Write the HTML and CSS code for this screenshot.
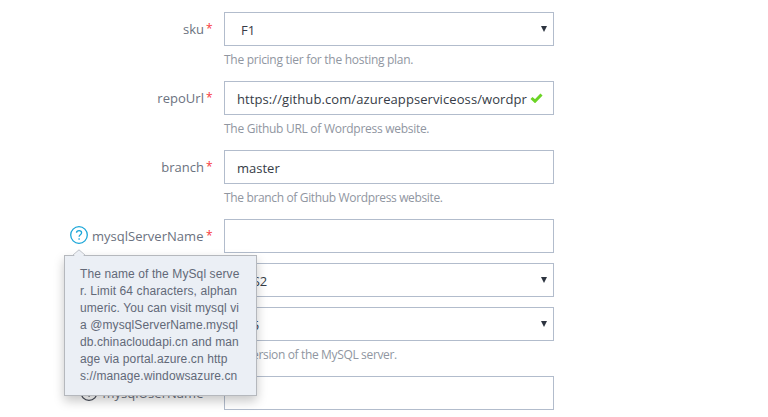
FILE: index.html
```html
<!DOCTYPE html>
<html lang="en">
<head>
<meta charset="utf-8">
<title>Template parameters</title>
<link rel="stylesheet" href="styles.css">
</head>
<body>
<main class="form">
  <div class="row">
    <div class="label"><span class="name">sku</span><span class="required">*</span></div>
    <div class="field">
      <div class="control select"><span class="value">F1</span><svg class="arrow" viewBox="0 0 6 6"><path d="M0 0H6L3 6Z"/></svg></div>
      <p class="hint">The pricing tier for the hosting plan.</p>
    </div>
  </div>
  <div class="row">
    <div class="label"><span class="name">repoUrl</span><span class="required">*</span></div>
    <div class="field">
      <div class="control"><span class="value url">https://github.com/azureappserviceoss/wordpr</span><svg class="check" viewBox="0 0 13 10"><path d="M1.5 5L5 8.2L11.5 1.5"/></svg></div>
      <p class="hint">The Github URL of Wordpress website.</p>
    </div>
  </div>
  <div class="row">
    <div class="label"><span class="name">branch</span><span class="required">*</span></div>
    <div class="field">
      <div class="control"><span class="value">master</span></div>
      <p class="hint tight">The branch of Github Wordpress website.</p>
    </div>
  </div>
  <div class="row">
    <div class="label">
      <span class="help active"><svg viewBox="0 0 18 18"><circle cx="9" cy="9" r="8.3"/><path d="M6.5 6.8C6.6 3.9 11.6 3.9 11.6 6.8C11.6 8.8 9.1 8.8 9.1 10.8M9.1 12.3V13.8"/></svg></span>
      <span class="name long">mysqlServerName</span><span class="required">*</span>
      <div class="tooltip"><svg class="pointer" viewBox="0 0 14 8"><path class="fill" d="M1 8L7 1L13 8Z"/><path class="edge" d="M0.5 6.5L7 .8L13.5 6.5"/></svg>The name of the MySql serve<br>r. Limit 64 characters, alphan<br>umeric. You can visit mysql vi<br>a @mysqlServerName.mysql<br>db.chinacloudapi.cn and man<br>age via portal.azure.cn http<br>s://manage.windowsazure.cn</div>
    </div>
    <div class="field"><div class="control"></div></div>
  </div>
  <div class="row">
    <div class="label"></div>
    <div class="field"><div class="control select"><span class="value">MS2</span><svg class="arrow" viewBox="0 0 6 6"><path d="M0 0H6L3 6Z"/></svg></div></div>
  </div>
  <div class="row">
    <div class="label"></div>
    <div class="field">
      <div class="control select"><span class="value">5.5</span><svg class="arrow" viewBox="0 0 6 6"><path d="M0 0H6L3 6Z"/></svg></div>
      <p class="hint tight">The version of the MySQL server.</p>
    </div>
  </div>
  <div class="row">
    <div class="label">
      <span class="help"><svg viewBox="0 0 18 18"><circle cx="9" cy="9" r="8.3"/><path d="M6.5 6.8C6.6 3.9 11.6 3.9 11.6 6.8C11.6 8.8 9.1 8.8 9.1 10.8M9.1 12.3V13.8"/></svg></span>
      <span class="name long">mysqlUserName</span><span class="required">*</span>
    </div>
    <div class="field"><div class="control"></div></div>
  </div>
</main>
</body>
</html>
```
FILE: styles.css
```css
* { box-sizing: border-box; }
body {
  margin: 0;
  height: 417px;
  overflow: hidden;
  background: #fff;
  font-family: "Open Sans", "Noto Sans", sans-serif;
  font-size: 13px;
}
.form { display: flex; flex-direction: column; gap: 10px; padding-top: 12px; }
.row { display: grid; grid-template-columns: 212px 330px; column-gap: 12px; }
.label {
  position: relative;
  display: flex;
  justify-content: flex-end;
  align-items: center;
  height: 34px;
  color: #6b7280;
  line-height: 18px;
}
.name { letter-spacing: .03px; }
.long { margin-right: .5px; }
.required { margin-left: 2px; color: #f8383b; width: 6px; font-size: 12px; }
.help { width: 18px; height: 18px; margin: -2px 4px 0 0; color: #454b57; }
.help svg { display: block; fill: none; stroke: currentColor; stroke-width: 1.3; }
.help.active { color: #1ba6d8; }
.control {
  display: flex;
  align-items: center;
  height: 34px;
  padding: 1px 10px 0 12px;
  border: 1px solid #b2bccc;
  color: #363c47;
}
.select { padding: 1px 6px 0 16px; }
.value { white-space: nowrap; }
.url { width: 291px; letter-spacing: .09px; }
.arrow { width: 6px; height: 6px; margin: -1px 0 0 auto; fill: #2d3440; }
.check { width: 13px; height: 10px; flex: none; margin: -2px 0 0 2px; fill: none; stroke: #6bd425; stroke-width: 3; }
.hint {
  height: 25px;
  margin: 0;
  padding-top: 6px;
  line-height: 16px;
  font-size: 12px;
  letter-spacing: -.28px;
  color: #9096a1;
  white-space: nowrap;
}
.tight { letter-spacing: -.35px; }
.tooltip {
  position: absolute;
  z-index: 2;
  left: 64px;
  top: 36px;
  width: 193px;
  height: 141px;
  padding: 10px 0 0 15px;
  border: 1px solid #b5b8bd;
  background: #ebeff5;
  box-shadow: 0 5px 10px rgba(0, 0, 0, .22);
  font: 12px/17px "Liberation Sans", Arial, sans-serif;
  letter-spacing: .1px;
  color: #626978;
  white-space: nowrap;
}
.pointer { position: absolute; left: 7px; top: -7px; width: 14px; height: 8px; }
.fill { fill: #ebeff5; }
.edge { fill: none; stroke: #b9bec7; }
```
